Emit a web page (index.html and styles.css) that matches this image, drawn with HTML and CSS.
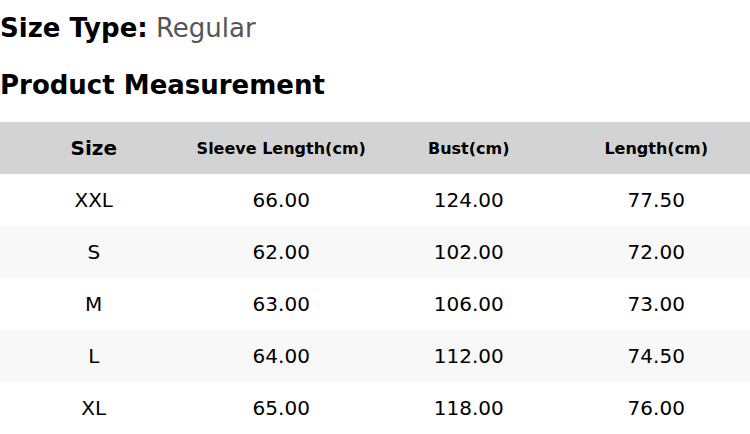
FILE: index.html
```html
<!DOCTYPE html>
<html>
<head>
<meta charset="utf-8">
<link rel="stylesheet" href="styles.css">
</head>
<body>
<div class="page">
  <p class="size-type"><span class="label">Size Type:</span> <span class="value">Regular</span></p>
  <h2 class="title">Product Measurement</h2>
  <table class="chart">
    <thead>
      <tr><th class="first">Size</th><th>Sleeve Length(cm)</th><th>Bust(cm)</th><th>Length(cm)</th></tr>
    </thead>
    <tbody>
      <tr><td>XXL</td><td>66.00</td><td>124.00</td><td>77.50</td></tr>
      <tr><td>S</td><td>62.00</td><td>102.00</td><td>72.00</td></tr>
      <tr><td>M</td><td>63.00</td><td>106.00</td><td>73.00</td></tr>
      <tr><td>L</td><td>64.00</td><td>112.00</td><td>74.50</td></tr>
      <tr><td>XL</td><td>65.00</td><td>118.00</td><td>76.00</td></tr>
    </tbody>
  </table>
</div>
</body>
</html>
```
FILE: styles.css
```css
html, body { margin: 0; padding: 0; background: #fff; }
body { font-family: "DejaVu Sans", sans-serif; color: #000; }
.page { width: 750px; }
.size-type { margin: 0; font-size: 26px; line-height: 56px; }
.size-type .label { font-weight: bold; }
.size-type .value { color: #555; }
.title { margin: 1px 0 0; font-size: 26px; font-weight: bold; line-height: 56px; }
.chart { width: 750px; border-collapse: collapse; table-layout: fixed; margin-top: 9px; }
.chart th { background: #d3d3d3; height: 52px; padding: 0; font-size: 16px; font-weight: bold; text-align: center; }
.chart th.first { font-size: 20px; }
.chart td { height: 52px; padding: 0; font-size: 20px; text-align: center; }
.chart tbody tr:nth-child(even) td { background: #f8f8f8; }
```
